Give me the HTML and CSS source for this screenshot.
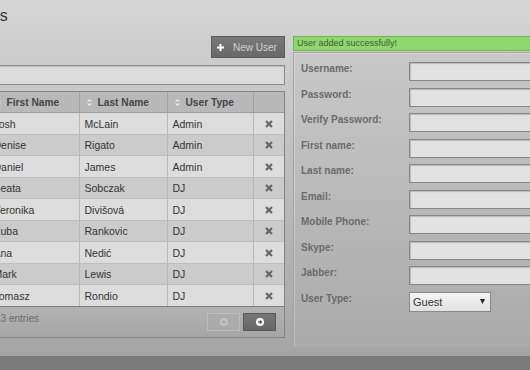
FILE: index.html
```html
<!DOCTYPE html>
<html lang="en">
<head>
      <meta charset="UTF-8">
      <meta name="viewport" content="width=device-width, initial-scale=1.0">
      <title>Users</title>
      <link rel="stylesheet" href="styles.css">
</head>
<body>
      <main class="main">
            <div class="page">
                  <h1>Users</h1>
                  <div class="columns">
                        <section class="list">
                              <div class="toolbar">
                                    <button class="btn-new" type="button">
                                          <svg width="7" height="7" viewBox="0 0 7 7"><path d="M3.5 0v7M0 3.5h7" stroke="#fff" stroke-width="2"/></svg>
                                          New User
                                    </button>
                              </div>
                              <input class="search" type="text">
                              <div class="table-box">
                                    <table class="users">
                                          <colgroup>
                                                <col style="width:81px"><col style="width:91px"><col style="width:88px"><col style="width:86px"><col>
                                          </colgroup>
                                          <thead>
                                                <tr>
                                                      <th><svg class="sort" width="5" height="9" viewBox="0 0 5 9"><path d="M.7 3.6 2.5 1.8 4.3 3.6M.7 5.4 2.5 7.2 4.3 5.4" fill="none" stroke="#eee" stroke-width="1.2"/></svg>Username</th>
                                                      <th><svg class="sort" width="5" height="9" viewBox="0 0 5 9"><path d="M.7 3.6 2.5 1.8 4.3 3.6M.7 5.4 2.5 7.2 4.3 5.4" fill="none" stroke="#eee" stroke-width="1.2"/></svg>First Name</th>
                                                      <th><svg class="sort" width="5" height="9" viewBox="0 0 5 9"><path d="M.7 3.6 2.5 1.8 4.3 3.6M.7 5.4 2.5 7.2 4.3 5.4" fill="none" stroke="#eee" stroke-width="1.2"/></svg>Last Name</th>
                                                      <th><svg class="sort" width="5" height="9" viewBox="0 0 5 9"><path d="M.7 3.6 2.5 1.8 4.3 3.6M.7 5.4 2.5 7.2 4.3 5.4" fill="none" stroke="#eee" stroke-width="1.2"/></svg>User Type</th>
                                                      <th></th>
                                                </tr>
                                          </thead>
                                          <tbody id="rows"></tbody>
                                    </table>
                                    <div class="table-foot">
                                          <span class="info">Showing 1 to 9 of 13 entries</span>
                                          <div class="pager">
                                                <button class="page-btn prev" type="button" disabled>
                                                      <svg width="8" height="8" viewBox="0 0 8 8"><circle cx="4" cy="4" r="4" fill="#c2c2c2"/><path d="M5.8 4H2.6M4.1 2.4 2.4 4l1.7 1.6" fill="none" stroke="#ababab" stroke-width="1.3"/></svg>
                                                </button>
                                                <button class="page-btn next" type="button">
                                                      <svg width="8" height="8" viewBox="0 0 8 8"><circle cx="4" cy="4" r="4" fill="#fff"/><path d="M2.2 4h3.2M3.9 2.4 5.6 4 3.9 5.6" fill="none" stroke="#555" stroke-width="1.3"/></svg>
                                                </button>
                                          </div>
                                    </div>
                              </div>
                        </section>
                        <section class="editor">
                              <div class="notice">User added successfully!</div>
                              <form class="form-panel">
                                    <label>Username:</label><input type="text">
                                    <label>Password:</label><input type="password">
                                    <label>Verify Password:</label><input type="password">
                                    <label>First name:</label><input type="text">
                                    <label>Last name:</label><input type="text">
                                    <label>Email:</label><input type="text">
                                    <label>Mobile Phone:</label><input type="text">
                                    <label>Skype:</label><input type="text">
                                    <label>Jabber:</label><input type="text">
                                    <label>User Type:</label>
                                    <div class="select">
                                          <select>
                                                <option>Guest</option>
                                                <option>DJ</option>
                                                <option>Admin</option>
                                          </select>
                                          <svg width="5" height="5" viewBox="0 0 5 5"><path d="M0 0h5L2.5 5z" fill="#222"/></svg>
                                    </div>
                              </form>
                        </section>
                  </div>
            </div>
      </main>
      <script>
            const users = [
                  ["josh", "Josh", "McLain", "Admin"],
                  ["denise", "Denise", "Rigato", "Admin"],
                  ["daniel", "Daniel", "James", "Admin"],
                  ["beata", "Beata", "Sobczak", "DJ"],
                  ["veronika", "Veronika", "Divišová", "DJ"],
                  ["kuba", "Kuba", "Rankovic", "DJ"],
                  ["ana", "Ana", "Nedić", "DJ"],
                  ["mark", "Mark", "Lewis", "DJ"],
                  ["tomasz", "Tomasz", "Rondio", "DJ"]
            ];
            const rows = document.getElementById("rows");
            users.forEach(u => {
                  rows.innerHTML += `<tr>
                        <td>${u[0]}</td><td>${u[1]}</td><td>${u[2]}</td><td>${u[3]}</td>
                        <td class="del"><svg width="8" height="8" viewBox="0 0 8 8"><path d="M1 1l6 6M7 1 1 7" stroke="#666" stroke-width="2.2"/></svg></td>
                  </tr>`;
            });
      </script>
</body>
</html>
```

FILE: styles.css
```css
html{
      font-family: "Liberation Sans", Arial, sans-serif;
}
body{
      margin: 0;
      background: #7a7a7a;
      overflow: hidden;
}
.main{
      display: block;
      height: 356px;
      overflow: hidden;
      background: linear-gradient(#d5d5d5, #a5a5a5);
}
.page{
      margin-left: -94px;
}
h1{
      margin: 0;
      padding: 6px 0 10px 60px;
      font-size: 16px;
      line-height: 20px;
      font-weight: normal;
      color: #333;
}
.columns{
      display: flex;
      gap: 8px;
      align-items: flex-start;
}
.list{
      flex: none;
      width: 379px;
}
.toolbar{
      display: flex;
      justify-content: flex-end;
}
.btn-new{
      display: flex;
      align-items: center;
      gap: 9px;
      box-sizing: border-box;
      width: 74px;
      height: 22px;
      padding: 0 0 0 5px;
      border: 1px solid #5c5c5c;
      background: linear-gradient(#797979, #686868);
      color: #d2d2d2;
      font: 10px "Liberation Sans", Arial, sans-serif;
}
.search{
      display: block;
      box-sizing: border-box;
      width: 100%;
      height: 20px;
      margin: 7px 0 0;
      border: 1px solid #8c8c8c;
      background: #dcdcdc;
      box-shadow: inset 0 1px 1px rgba(0,0,0,.15);
}
.table-box{
      margin-top: 6px;
      border: 1px solid #838383;
}
.users{
      width: 100%;
      border-collapse: collapse;
      table-layout: fixed;
      font-size: 10.5px;
      color: #333;
}
.users th{
      height: 20px;
      padding: 0 0 0 7px;
      background: #b9b9b9;
      border-right: 1px solid #a2a2a2;
      border-bottom: 1px solid #9c9c9c;
      text-align: left;
      font-size: 10.2px;
      color: #454545;
      white-space: nowrap;
}
.sort{
      margin-right: 6px;
      vertical-align: -1px;
}
.users td{
      height: 19.5px;
      padding: 1px 0 0 5px;
      border-right: 1px solid #b7b7b7;
      border-bottom: 1px solid #bebebe;
      white-space: nowrap;
}
.users tbody tr:nth-child(odd) td{
      background: #dddddd;
}
.users tbody tr:nth-child(even) td{
      background: #cbcbcb;
}
.users th:last-child, .users td:last-child{
      border-right: none;
}
.users tbody tr:last-child td{
      border-bottom: none;
}
.users .del{
      padding: 0;
      text-align: center;
}
.users .del svg{
      display: block;
      margin: 1px auto 0;
}
.table-foot{
      display: flex;
      justify-content: space-between;
      align-items: flex-start;
      height: 31px;
      box-sizing: border-box;
      padding: 6px 8px 0;
      border-top: 1px solid #7e7e7e;
      background: linear-gradient(#b2b2b2, #a6a6a6);
}
.info{
      font-size: 10px;
      line-height: 12px;
      color: #6c6c6c;
}
.pager{
      display: flex;
      gap: 3px;
}
.page-btn{
      display: flex;
      align-items: center;
      justify-content: center;
      width: 33px;
      height: 18px;
      padding: 0;
      box-sizing: border-box;
}
.prev{
      border: 1px solid #bdbdbd;
      background: #ababab;
}
.next{
      border: 1px solid #5a5a5a;
      background: linear-gradient(#767676, #676767);
}
.editor{
      flex: none;
      width: 320px;
}
.notice{
      box-sizing: border-box;
      height: 15px;
      padding: 0 3px;
      border: 1px solid #6eb651;
      background: #8fd76e;
      font-size: 9px;
      line-height: 13px;
      color: #3d5e2f;
}
.form-panel{
      display: grid;
      grid-template-columns: 108px 170px;
      row-gap: 6.5px;
      align-content: start;
      box-sizing: border-box;
      height: 296px;
      margin: 1px 0 0;
      padding: 9px 0 0 7px;
      border: 1px solid #a4a4a4;
      background: linear-gradient(#c8c8c8, #aaaaaa);
      box-shadow: inset 1px 1px 0 rgba(255,255,255,.25);
}
.form-panel label{
      font-size: 10px;
      font-weight: bold;
      line-height: 14px;
      color: #6a6a6a;
}
.form-panel input{
      box-sizing: border-box;
      height: 19px;
      margin: 0;
      border: 1px solid #868686;
      background: #e2e2e2;
      box-shadow: inset 1px 1px 1px rgba(0,0,0,.18);
}
.select{
      position: relative;
      width: 82px;
      height: 20px;
}
.select select{
      appearance: none;
      box-sizing: border-box;
      width: 100%;
      height: 20px;
      margin: 0;
      padding: 0 0 0 3px;
      border: 1px solid #898989;
      border-radius: 0;
      background: linear-gradient(#f3f3f3, #e2e2e2);
      font: 11px "Liberation Sans", Arial, sans-serif;
      color: #333;
}
.select svg{
      position: absolute;
      right: 6px;
      top: 7px;
      pointer-events: none;
}
```
